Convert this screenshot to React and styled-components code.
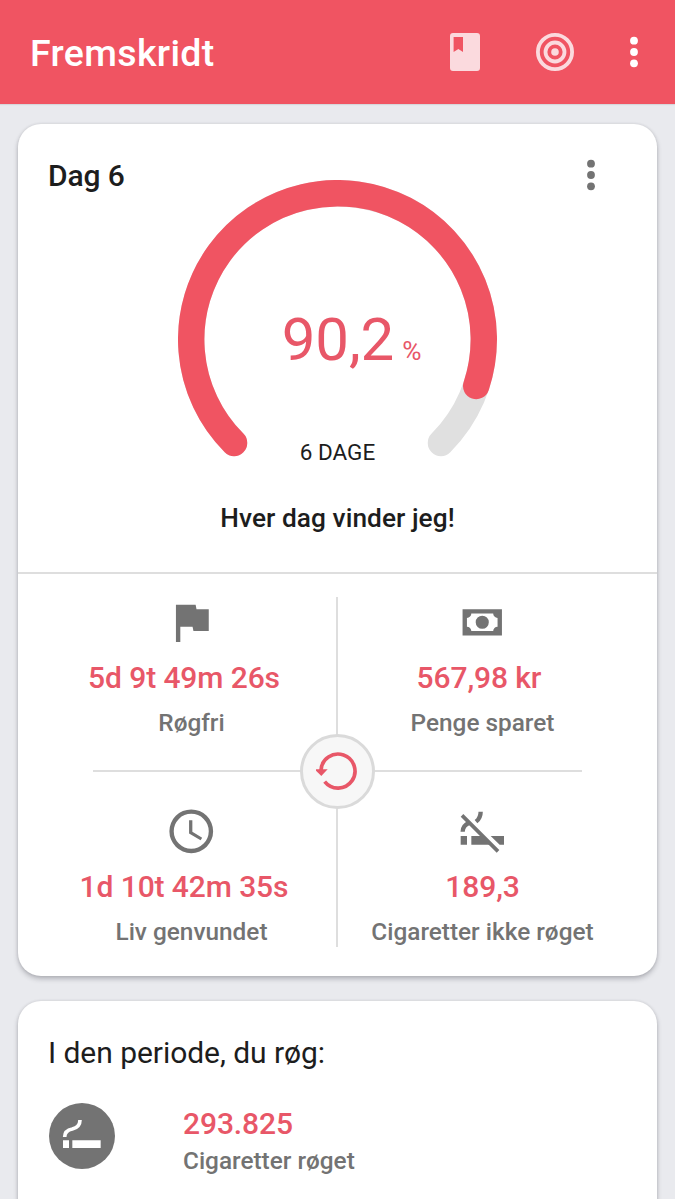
import React from "react";
import styled, { createGlobalStyle } from "styled-components";

const red = "#f05462";
const textRed = "#e85768";
const grey = "#737373";

const GlobalStyle = createGlobalStyle`
  * { box-sizing: border-box; }
  body { margin: 0; background: #e9eaee; font-family: Roboto, "Liberation Sans", sans-serif; }
  svg { display: block; flex: none; }
`;

const Screen = styled.div`
  width: 675px;
  height: 1199px;
  overflow: hidden;
  background: #e9eaee;
  display: flex;
  flex-direction: column;
`;

const AppBar = styled.header`
  flex: none;
  height: 104px;
  padding: 0 8px 0 30px;
  background: ${red};
  display: flex;
  align-items: center;
  box-shadow: 0 1px 1px rgba(0, 0, 0, 0.08);
`;

const AppTitle = styled.h1`
  flex: 1;
  margin: 0;
  padding-top: 2px;
  color: #fff;
  font-size: 37.5px;
  line-height: 44px;
  font-weight: 500;
  letter-spacing: 0.35px;
`;

const IconButton = styled.button`
  width: ${(p) => p.$width}px;
  height: 45px;
  padding: 0;
  border: 0;
  background: none;
  color: ${(p) => p.$color};
  display: flex;
  align-items: center;
  justify-content: center;
`;

const Content = styled.main`
  padding: 20px 18px 0;
  display: flex;
  flex-direction: column;
  gap: 25px;
`;

const Card = styled.section`
  background: #fff;
  border-radius: 23px;
  box-shadow: 0 3px 5px rgba(50, 50, 60, 0.28), 0 0 3px rgba(50, 50, 60, 0.14);
  height: ${(p) => p.$height}px;
  flex: none;
`;

const Hero = styled.div`
  height: 450px;
  border-bottom: 2px solid #dedede;
  display: grid;
  grid-template-columns: 1fr 320px 1fr;
  grid-template-rows: 379px 31px;
`;

const DayTitle = styled.h2`
  margin: 34px 0 0 30px;
  font-size: 30px;
  line-height: 35px;
  font-weight: 500;
  letter-spacing: -0.1px;
  color: #1d1d1d;
`;

const Gauge = styled.div`
  padding-top: 56px;
  display: grid;
  & > * { grid-area: 1 / 1; }
`;

const GaugeReadout = styled.div`
  padding-top: 125px;
  display: flex;
  flex-direction: column;
  align-items: center;
`;

const Percent = styled.div`
  height: 70px;
  margin-left: 28px;
  display: flex;
  align-items: baseline;
  gap: 8px;
  color: ${textRed};
  font-size: 60px;
  line-height: 70px;
  letter-spacing: -0.1px;
`;

const PercentSign = styled.span`
  font-size: 26.25px;
`;

const GoalText = styled.div`
  margin-top: 64px;
  font-size: 22.5px;
  line-height: 26px;
  color: #1d1d1d;
`;

const MenuSlot = styled.div`
  padding: 28px 43.5px 0 0;
  display: flex;
  justify-content: flex-end;
`;

const Motto = styled.div`
  grid-column: 1 / -1;
  text-align: center;
  font-size: 26.25px;
  line-height: 31px;
  font-weight: 500;
  letter-spacing: 0.06px;
  color: #1d1d1d;
`;

const Stats = styled.div`
  height: 402px;
  padding: 0 29px 0 28px;
  display: grid;
  grid-template-columns: 1fr 1fr;
  grid-template-rows: 197.5px 204.5px;
`;

const Stat = styled.div`
  grid-area: ${(p) => p.$row} / ${(p) => p.$col};
  padding-top: ${(p) => (p.$row === 1 ? 22 : 33.5)}px;
  display: flex;
  flex-direction: column;
  align-items: center;
`;

const Value = styled.div`
  font-size: 30px;
  line-height: 35px;
  font-weight: 500;
  letter-spacing: -0.1px;
  color: ${textRed};
  white-space: nowrap;
`;

const StatValue = styled(Value)`
  margin-top: 11.5px;
  padding-right: ${(p) => p.$trail || 0}px;
`;

const StatLabel = styled.div`
  margin-top: 14px;
  font-size: 24.375px;
  line-height: 28px;
  font-weight: 500;
  color: ${grey};
  white-space: nowrap;
`;

const VerticalRule = styled.div`
  grid-area: 1 / 1 / 3 / 3;
  justify-self: center;
  width: 2px;
  height: 350px;
  margin-top: 23px;
  background: #dedede;
`;

const HorizontalRule = styled.div`
  grid-area: 1 / 1 / 3 / 3;
  justify-self: center;
  width: 489px;
  height: 2px;
  margin-top: 196px;
  background: #dedede;
`;

const ResetButton = styled.button`
  grid-area: 1 / 1 / 3 / 3;
  justify-self: center;
  width: 75px;
  height: 75px;
  margin: 160px 0 0 1px;
  padding: 0 0 2px;
  border: 3px solid #dadada;
  border-radius: 50%;
  background: #f7f7f7;
  display: flex;
  align-items: center;
  justify-content: center;
`;

const PeriodTitle = styled.h2`
  margin: 0;
  padding: 34px 30px 0;
  font-size: 30px;
  line-height: 35px;
  font-weight: 400;
  letter-spacing: -0.05px;
  color: #1d1d1d;
`;

const PeriodRow = styled.div`
  padding: 33px 30.7px 0;
  display: flex;
  gap: 68.3px;
`;

const RoundIcon = styled.div`
  width: 66px;
  height: 66px;
  border-radius: 50%;
  background: ${grey};
`;

const PeriodText = styled.div`
  padding-top: 3px;
`;

const PeriodLabel = styled.div`
  margin-top: 6px;
  font-size: 24.375px;
  line-height: 28px;
  font-weight: 500;
  color: ${grey};
`;

const DotsIcon = () => (
  <svg width="10" height="32" viewBox="-5 -16 10 32" fill="currentColor">
    <circle cy="-11.3" r="3.9" />
    <circle r="3.9" />
    <circle cy="11.3" r="3.9" />
  </svg>
);

const BookIcon = () => (
  <svg width="30" height="38" viewBox="0 0 30 38" fill="currentColor">
    <path
      fillRule="evenodd"
      d="M3 0h24Q30 0 30 3v32Q30 38 27 38h-24Q0 38 0 35v-32Q0 0 3 0ZM3.6 3.9v15.2l4.8-3 4.6 3V3.9Z"
    />
  </svg>
);

const TargetIcon = () => (
  <svg width="38" height="38" viewBox="-10 -10 20 20" fill="none" stroke="currentColor" strokeWidth="2">
    <circle r="9" />
    <circle r="5" />
    <circle r="2" fill="currentColor" stroke="none" />
  </svg>
);

const StatIcon = ({ d }) => (
  <svg width="52.5" height="52.5" viewBox="0 0 24 24" fill={grey}>
    <path d={d} />
  </svg>
);

const FLAG = "M14.4 6L14 4H5v17h2v-7h5.6l.4 2h7V6z";
const CASH =
  "M3,6H21V18H3V6M12,9A3,3 0 0,1 15,12A3,3 0 0,1 12,15A3,3 0 0,1 9,12A3,3 0 0,1 12,9M7,8A2,2 0 0,1 5,10V14A2,2 0 0,1 7,16H17A2,2 0 0,1 19,14V10A2,2 0 0,1 17,8H7Z";
const CLOCK =
  "M12,20A8,8 0 0,0 20,12A8,8 0 0,0 12,4A8,8 0 0,0 4,12A8,8 0 0,0 12,20M12,2A10,10 0 0,1 22,12A10,10 0 0,1 12,22A10,10 0 0,1 2,12A10,10 0 0,1 12,2M12.5,7V12.25L17,14.92L16.25,16.15L11,13V7H12.5Z";

const NoSmokingIcon = () => (
  <svg width="52.5" height="52.5" viewBox="0 0 157.5 157.5" fill={grey}>
    <path d="M14 93h19v26H14zM46 93h33l27 26H46zM104 93h40v26h-13z" />
    <path d="M18 31 126 139" stroke={grey} strokeWidth="11" />
    <path d="M20 80C20 66 27 58 41 53" fill="none" stroke={grey} strokeWidth="13" />
    <path d="M74 20C74 34 70 42 60 50" fill="none" stroke={grey} strokeWidth="13" />
  </svg>
);

const SmokingIcon = () => (
  <svg width="66" height="66" viewBox="0 0 198 198" fill="#fff">
    <path d="M42 112h18v23H42zM70 112h85v23H70z" />
    <path d="M47 102C47 88 54 81 70 78C86 74 93 67 93 51" fill="none" stroke="#fff" strokeWidth="11" />
  </svg>
);

const ResetIcon = () => (
  <svg width="44" height="44" viewBox="-66 -66 132 132">
    <path d="M-40 32A51 51 0 1 0 -51 -2" fill="none" stroke={textRed} strokeWidth="11" />
    <path d="M-70 -5h39L-50 15z" fill={textRed} />
  </svg>
);

function point(cx, cy, r, degrees) {
  const a = (degrees * Math.PI) / 180;
  return `${cx + r * Math.cos(a)} ${cy + r * Math.sin(a)}`;
}

function GaugeArc({ percent }) {
  const arc = (sweep) =>
    `M${point(159.5, 159.5, 146.3, 135)}A146.3 146.3 0 ${sweep > 180 ? 1 : 0} 1 ${point(159.5, 159.5, 146.3, 135 + sweep)}`;
  return (
    <svg width="320" height="290" viewBox="0 0 320 290" fill="none" strokeWidth="26.4" strokeLinecap="round">
      <path d={arc(270)} stroke="#e0e0e0" />
      <path d={arc(2.7 * percent)} stroke={red} />
    </svg>
  );
}

const stats = [
  { row: 1, col: 1, icon: <StatIcon d={FLAG} />, value: "5d 9t 49m 26s", label: "Røgfri", trail: 15 },
  { row: 1, col: 2, icon: <StatIcon d={CASH} />, value: "567,98 kr", label: "Penge sparet", trail: 7 },
  { row: 2, col: 1, icon: <StatIcon d={CLOCK} />, value: "1d 10t 42m 35s", label: "Liv genvundet", trail: 15 },
  { row: 2, col: 2, icon: <NoSmokingIcon />, value: "189,3", label: "Cigaretter ikke røget" },
];

export default function App() {
  return (
    <Screen>
      <GlobalStyle />
      <AppBar>
        <AppTitle>Fremskridt</AppTitle>
        <IconButton $width={90} $color="#fbdade" aria-label="Dagbog">
          <BookIcon />
        </IconButton>
        <IconButton $width={90} $color="#fbdade" aria-label="Mål">
          <TargetIcon />
        </IconButton>
        <IconButton $width={67} $color="#fff" aria-label="Menu">
          <DotsIcon />
        </IconButton>
      </AppBar>
      <Content>
        <Card $height={852}>
          <Hero>
            <DayTitle>Dag 6</DayTitle>
            <Gauge>
              <GaugeArc percent={90.2} />
              <GaugeReadout>
                <Percent>
                  90,2<PercentSign>%</PercentSign>
                </Percent>
                <GoalText>6 DAGE</GoalText>
              </GaugeReadout>
            </Gauge>
            <MenuSlot>
              <IconButton $width={45} $color={grey} aria-label="Mere">
                <DotsIcon />
              </IconButton>
            </MenuSlot>
            <Motto>Hver dag vinder jeg!</Motto>
          </Hero>
          <Stats>
            {stats.map((s) => (
              <Stat key={s.label} $row={s.row} $col={s.col}>
                {s.icon}
                <StatValue $trail={s.trail}>{s.value}</StatValue>
                <StatLabel>{s.label}</StatLabel>
              </Stat>
            ))}
            <VerticalRule />
            <HorizontalRule />
            <ResetButton aria-label="Nulstil">
              <ResetIcon />
            </ResetButton>
          </Stats>
        </Card>
        <Card $height={300}>
          <PeriodTitle>I den periode, du røg:</PeriodTitle>
          <PeriodRow>
            <RoundIcon>
              <SmokingIcon />
            </RoundIcon>
            <PeriodText>
              <Value>293.825</Value>
              <PeriodLabel>Cigaretter røget</PeriodLabel>
            </PeriodText>
          </PeriodRow>
        </Card>
      </Content>
    </Screen>
  );
}
